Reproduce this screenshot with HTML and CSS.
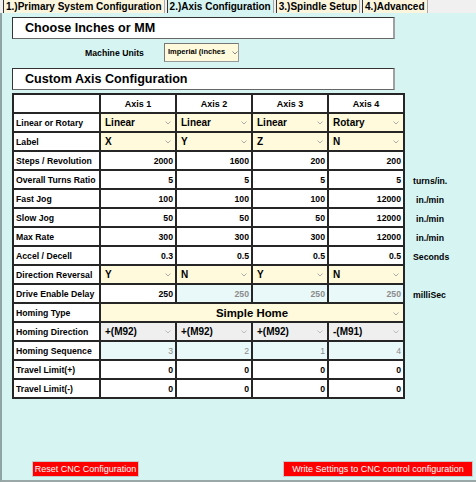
FILE: index.html
```html
<!DOCTYPE html>
<html>
<head>
<meta charset="utf-8">
<link rel="stylesheet" href="styles.css">
</head>
<body>
<div class="tabs">
  <div class="tab">1.)Primary System Configuration</div>
  <div class="tab active">2.)Axis Configuration</div>
  <div class="tab">3.)Spindle Setup</div>
  <div class="tab">4.)Advanced</div>
</div>
<div class="panel">
  <div class="section">Choose Inches or MM</div>
  <div class="units-row">
    <span class="units-label">Machine Units</span>
    <div class="unit-select"><span>Imperial (inches</span><svg class="chev" viewBox="0 0 6 4"><path d="M0.5 0.5 L3 3 L5.5 0.5" fill="none" stroke="#888"/></svg></div>
  </div>
  <div class="section second">Custom Axis Configuration</div>

  <div class="grid">
    <div class="c lbl top"></div>
    <div class="c hd top">Axis 1</div>
    <div class="c hd top">Axis 2</div>
    <div class="c hd top">Axis 3</div>
    <div class="c hd top">Axis 4</div>
    <div class="u"></div>

    <div class="c lbl">Linear or Rotary</div>
    <div class="c sel">Linear<svg class="chev" viewBox="0 0 6 4"><path d="M0.5 0.5 L3 3 L5.5 0.5" fill="none" stroke="#aaa"/></svg></div>
    <div class="c sel">Linear<svg class="chev" viewBox="0 0 6 4"><path d="M0.5 0.5 L3 3 L5.5 0.5" fill="none" stroke="#aaa"/></svg></div>
    <div class="c sel">Linear<svg class="chev" viewBox="0 0 6 4"><path d="M0.5 0.5 L3 3 L5.5 0.5" fill="none" stroke="#aaa"/></svg></div>
    <div class="c sel">Rotary<svg class="chev" viewBox="0 0 6 4"><path d="M0.5 0.5 L3 3 L5.5 0.5" fill="none" stroke="#aaa"/></svg></div>
    <div class="u"></div>

    <div class="c lbl">Label</div>
    <div class="c sel">X<svg class="chev" viewBox="0 0 6 4"><path d="M0.5 0.5 L3 3 L5.5 0.5" fill="none" stroke="#aaa"/></svg></div>
    <div class="c sel">Y<svg class="chev" viewBox="0 0 6 4"><path d="M0.5 0.5 L3 3 L5.5 0.5" fill="none" stroke="#aaa"/></svg></div>
    <div class="c sel">Z<svg class="chev" viewBox="0 0 6 4"><path d="M0.5 0.5 L3 3 L5.5 0.5" fill="none" stroke="#aaa"/></svg></div>
    <div class="c sel">N<svg class="chev" viewBox="0 0 6 4"><path d="M0.5 0.5 L3 3 L5.5 0.5" fill="none" stroke="#aaa"/></svg></div>
    <div class="u"></div>

    <div class="c lbl">Steps / Revolution</div>
    <div class="c num">2000</div>
    <div class="c num">1600</div>
    <div class="c num">200</div>
    <div class="c num">200</div>
    <div class="u"></div>

    <div class="c lbl">Overall Turns Ratio</div>
    <div class="c num">5</div>
    <div class="c num">5</div>
    <div class="c num">5</div>
    <div class="c num">5</div>
    <div class="u">turns/in.</div>

    <div class="c lbl">Fast Jog</div>
    <div class="c num">100</div>
    <div class="c num">100</div>
    <div class="c num">100</div>
    <div class="c num">12000</div>
    <div class="u ind">in./min</div>

    <div class="c lbl">Slow Jog</div>
    <div class="c num">50</div>
    <div class="c num">50</div>
    <div class="c num">50</div>
    <div class="c num">12000</div>
    <div class="u ind">in./min</div>

    <div class="c lbl">Max Rate</div>
    <div class="c num">300</div>
    <div class="c num">300</div>
    <div class="c num">300</div>
    <div class="c num">12000</div>
    <div class="u ind">in./min</div>

    <div class="c lbl">Accel / Decell</div>
    <div class="c num">0.3</div>
    <div class="c num">0.5</div>
    <div class="c num">0.5</div>
    <div class="c num">0.5</div>
    <div class="u">Seconds</div>

    <div class="c lbl">Direction Reversal</div>
    <div class="c sel">Y<svg class="chev" viewBox="0 0 6 4"><path d="M0.5 0.5 L3 3 L5.5 0.5" fill="none" stroke="#aaa"/></svg></div>
    <div class="c sel">N<svg class="chev" viewBox="0 0 6 4"><path d="M0.5 0.5 L3 3 L5.5 0.5" fill="none" stroke="#aaa"/></svg></div>
    <div class="c sel">Y<svg class="chev" viewBox="0 0 6 4"><path d="M0.5 0.5 L3 3 L5.5 0.5" fill="none" stroke="#aaa"/></svg></div>
    <div class="c sel">N<svg class="chev" viewBox="0 0 6 4"><path d="M0.5 0.5 L3 3 L5.5 0.5" fill="none" stroke="#aaa"/></svg></div>
    <div class="u"></div>

    <div class="c lbl">Drive Enable Delay</div>
    <div class="c num">250</div>
    <div class="c num dis">250</div>
    <div class="c num dis">250</div>
    <div class="c num dis">250</div>
    <div class="u">milliSec</div>

    <div class="c lbl">Homing Type</div>
    <div class="c sel wide">Simple Home<svg class="chev" viewBox="0 0 6 4"><path d="M0.5 0.5 L3 3 L5.5 0.5" fill="none" stroke="#aaa"/></svg></div>
    <div class="u"></div>

    <div class="c lbl">Homing Direction</div>
    <div class="c sel grey">+(M92)<svg class="chev" viewBox="0 0 6 4"><path d="M0.5 0.5 L3 3 L5.5 0.5" fill="none" stroke="#bbb"/></svg></div>
    <div class="c sel grey">+(M92)<svg class="chev" viewBox="0 0 6 4"><path d="M0.5 0.5 L3 3 L5.5 0.5" fill="none" stroke="#bbb"/></svg></div>
    <div class="c sel grey">+(M92)<svg class="chev" viewBox="0 0 6 4"><path d="M0.5 0.5 L3 3 L5.5 0.5" fill="none" stroke="#bbb"/></svg></div>
    <div class="c sel grey">-(M91)<svg class="chev" viewBox="0 0 6 4"><path d="M0.5 0.5 L3 3 L5.5 0.5" fill="none" stroke="#bbb"/></svg></div>
    <div class="u"></div>

    <div class="c lbl">Homing Sequence</div>
    <div class="c num dis light">3</div>
    <div class="c num dis light">2</div>
    <div class="c num dis light">1</div>
    <div class="c num dis light">4</div>
    <div class="u"></div>

    <div class="c lbl">Travel Limit(+)</div>
    <div class="c num">0</div>
    <div class="c num">0</div>
    <div class="c num">0</div>
    <div class="c num">0</div>
    <div class="u"></div>

    <div class="c lbl">Travel Limit(-)</div>
    <div class="c num">0</div>
    <div class="c num">0</div>
    <div class="c num">0</div>
    <div class="c num">0</div>
    <div class="u"></div>
  </div>

  <div class="buttons">
    <button class="btn reset">Reset CNC Configuration</button>
    <button class="btn write">Write Settings to CNC control configuration</button>
  </div>
</div>
</body>
</html>
```
FILE: styles.css
```css
* { box-sizing: border-box; }
body {
  margin: 0;
  width: 476px;
  height: 482px;
  overflow: hidden;
  background: #f0f0f0;
  font-family: "Liberation Sans", Arial, sans-serif;
  color: #000;
}
.tabs {
  display: flex;
  height: 13px;
  padding-left: 3px;
  background: #f0f0f0;
}
.tab {
  font-size: 10px;
  font-weight: bold;
  line-height: 13px;
  padding: 0 2px;
  white-space: nowrap;
  background: #fcf5dd;
  border-left: 1px solid #333;
  border-right: 1px solid #a8a8a8;
  margin-right: 2px;
}
.tab.active { background: #d5f4f2; }
.panel {
  height: 469px;
  background: #d5f4f2;
  border-left: 2px solid #8fa5a5;
  border-bottom: 2px solid #9aa8a8;
  padding: 4px 0 0 10px;
}
.section {
  width: 383px;
  height: 22px;
  background: #fff;
  border: 1px solid #333;
  border-right: 2px solid #a0a0a0;
  border-bottom: 1px solid #666;
  display: flex;
  align-items: center;
  padding-left: 12px;
  font-size: 12.6px;
  font-weight: bold;
}
.section.second { margin-top: 6px; }
.units-row {
  display: flex;
  align-items: center;
  height: 19px;
  margin-top: 4px;
}
.units-label {
  font-size: 8.7px;
  font-weight: bold;
  margin-left: 73px;
  width: 79px;
}
.unit-select {
  width: 75px;
  height: 19px;
  background: #fffadc;
  border: 1px solid #999;
  border-top-color: #777;
  border-left-color: #777;
  font-size: 7.5px;
  font-weight: bold;
  padding: 3px 0 0 3px;
  display: flex;
  align-items: flex-start;
  white-space: nowrap;
}
.unit-select span { width: 60px; }
.unit-select .chev { margin: 4px 0 0 4px; }
.chev {
  width: 6px;
  height: 4px;
  flex: none;
}
.grid {
  display: grid;
  grid-template-columns: 89px 76px 76px 76px 76px 1fr;
  grid-template-rows: 21px;
  grid-auto-rows: 19px;
  margin-top: 3px;
}
.c {
  border-right: 2px solid #262626;
  border-bottom: 2px solid #262626;
  background: #fff;
  display: flex;
  align-items: center;
  font-size: 8.7px;
  font-weight: bold;
  white-space: nowrap;
  overflow: hidden;
}
.c.top { border-top: 2px solid #262626; }
.lbl {
  border-left: 2px solid #262626;
  padding-left: 2px;
}
.hd { justify-content: center; font-size: 9px; }
.num {
  justify-content: flex-end;
  padding-right: 2px;
}
.num.dis {
  background: #e9f9f9;
  color: #8c8c8c;
}
.num.light { font-weight: normal; color: #8a8a8a; }
.sel {
  background: #fffadc;
  font-size: 10px;
  justify-content: space-between;
  padding: 0 4px 0 4px;
}
.sel .chev { margin-top: 1px; }
.sel.grey { background: #efefef; }
.sel.wide {
  grid-column: span 4;
  justify-content: center;
  font-size: 11.4px;
  position: relative;
}
.sel.wide .chev {
  position: absolute;
  right: 4px;
  top: 7px;
}
.u {
  font-size: 8.7px;
  font-weight: bold;
  display: flex;
  align-items: center;
  padding-left: 8px;
  white-space: nowrap;
}
.u.ind { padding-left: 11px; }
.buttons {
  display: flex;
  justify-content: space-between;
  margin: 62px 3px 0 20px;
}
.btn {
  height: 16px;
  background: #ff0000;
  color: #fff;
  border: 1px solid #c8c8c8;
  font-family: "Liberation Sans", Arial, sans-serif;
  font-size: 9px;
  padding: 0;
  margin: 0;
}
.btn.reset { width: 107px; }
.btn.write { width: 190px; }
```
